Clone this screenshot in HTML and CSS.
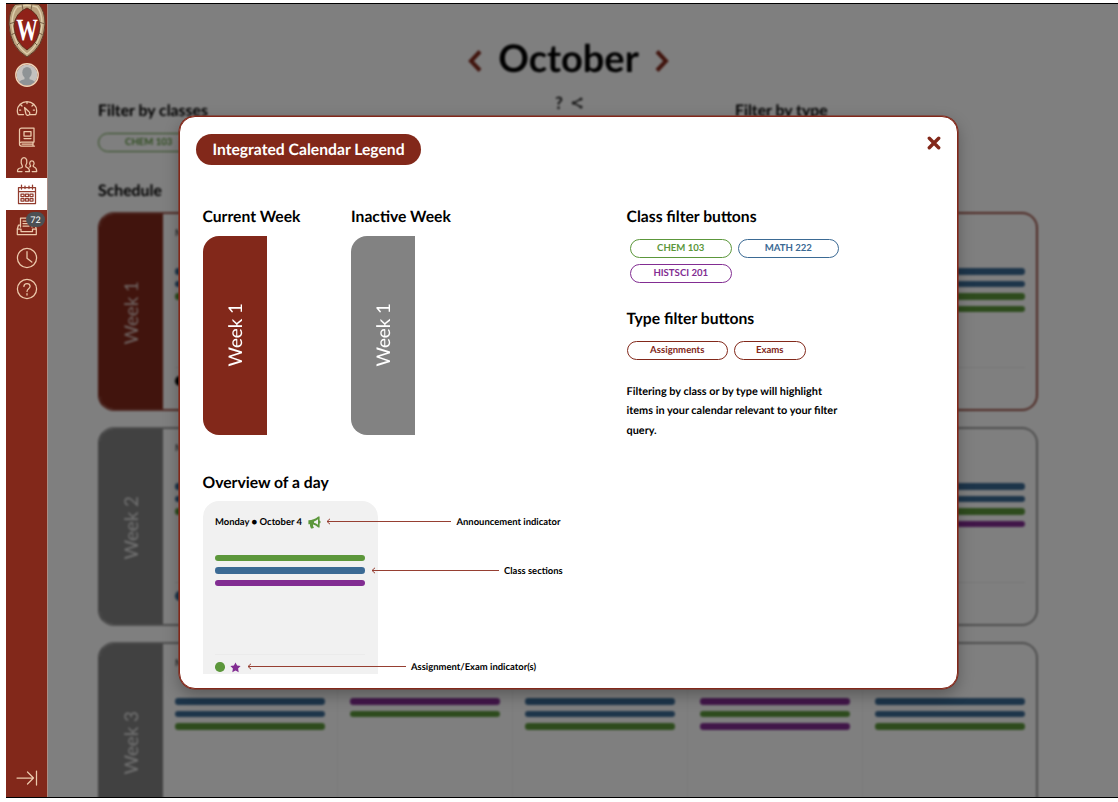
FILE: index.html
```
<!DOCTYPE html>
<html lang="en">
<head>
<meta charset="utf-8">
<title>Integrated Calendar</title>
<link rel="stylesheet" href="styles.css">
</head>
<body>
<div class="frame">
  <nav class="sidebar">
    <a class="nav-crest">
      <svg width="38" height="54" viewBox="0 0 38 54">
        <path d="M7 .5Q19-2 31 .5Q37 7 37 20Q36 43 19 53Q2 43 1 20Q1 7 7 .5Z" fill="#b9a17d" stroke="#5d3d2b"/>
        <path d="M9 3Q19 0 29 3Q34 9 34 20Q32 41 19 50Q6 41 4 20Q4 9 9 3Z" fill="none" stroke="#dccdaa" stroke-width="1.500"/>
        <path d="M1 20l6-2M3 31l6-3M9 41l4-4M37 20l-6-2M35 31l-6-3M29 41l-4-4M14 0l1 6M24 0l-1 6" stroke="#786148" stroke-width="1"/>
        <path d="M19 4Q31 9 32 22Q31 38 19 46Q7 38 6 22Q7 9 19 4Z" fill="#8f2119" stroke="#60301f"/>
        <text class="crest-letter" transform="translate(19 35.500) scale(.7 1)" text-anchor="middle">W</text>
      </svg>
    </a>
    <a class="nav-item nav-avatar">
      <svg width="26" height="26" viewBox="0 0 26 26"><defs><clipPath id="face"><circle cx="13" cy="13" r="10.5"/></clipPath></defs><circle cx="13" cy="13" r="11" fill="#82281a"/><g clip-path="url(#face)" fill="#a5a8ac"><path fill="#c4c1bf" d="M0 0h26v26H0z"/><ellipse cx="13" cy="10.500" rx="4.700" ry="5.600" fill="#8f9396"/><path fill="#8f9396" d="M10.500 14h5v3.200q6 1.500 7 4.800v4h-19v-4q1-3.300 7-4.800z"/></g><circle cx="13" cy="13" r="11.200" fill="none" stroke="#efd3b7" stroke-width="1.400"/></svg>
    </a>
    <a class="nav-item nav-gauge">
      <svg class="line" width="22" height="22" viewBox="0 0 22 22"><path d="M7.500 17.500H2.200Q1.300 15.500 1.300 13.700A9.700 9.200 0 0 1 20.700 13.700Q20.700 15.500 19.800 17.500H14M8.500 10.500l4.200 4a2 2 0 1 1-2.900 2zM11 5v1.500M5 8l1 1M17 8l-1 1M3.500 13h1.200M17.300 13h1.200"/></svg>
    </a>
    <a class="nav-item nav-book">
      <svg class="line" width="20" height="22" viewBox="0 0 20 22"><path d="M4.500 2H17v14H4.500a2 2 0 0 0 0 4H17.500M2.500 18V4a2 2 0 0 1 2-2M16 16v4M7 5.500h7v4.500H7zM7 12.500h7M5 18h11"/></svg>
    </a>
    <a class="nav-item nav-people">
      <svg class="line" width="22" height="20" viewBox="0 0 22 20"><path d="M6 16.500H1.500q-.2-3 3-3.500 2.300-.4 1.800-2Q4.600 7.500 5.300 5q.7-2.400 2.700-2.400t2.700 2.400q.7 2.700-1 5.500-.2 1.600 1.300 2 2.500.700 2.500 4H9.500M13.500 12q1.600-.4 1-1.400-1.200-1.600-.7-3.100.5-1.700 2.100-1.700T18 7.500q.5 1.500-.8 3.100-.4 1 1 1.400 2.500.8 2.500 4.500h-4.500"/></svg>
    </a>
    <a class="nav-item nav-calendar">
      <svg class="line" width="20" height="22" viewBox="0 0 20 22"><path d="M1.500 3.500h17v16h-17zM1.500 7.500h17M4.500 1v4M15.500 1v4M8 2v2.500M12 2v2.500"/><path d="M4 10h3v2.500H4zM8.500 10h3v2.500h-3zM13 10h3v2.500h-3zM4 14.500h3V17H4zM8.500 14.500h3V17h-3zM13 14.500h3V17h-3z"/></svg>
    </a>
    <a class="nav-item nav-inbox">
      <svg class="line" width="22" height="22" viewBox="0 0 22 22"><path d="M4.500 12V3H16v9M7 6h6M7 8.500h6M7 11h6M4.500 10H2.500l-1.200 4v5.500h19V14l-1.200-4H16M1.300 14H5v2.500h11.500V14h3.800"/></svg>
      <span class="badge">72</span>
    </a>
    <a class="nav-item nav-clock">
      <svg class="line" width="22" height="22" viewBox="0 0 22 22"><circle cx="11" cy="11" r="9.600"/><path d="M11 4.500v6.800l4.800 3.700"/></svg>
    </a>
    <a class="nav-item nav-help">
      <svg class="line" width="22" height="22" viewBox="0 0 22 22"><circle cx="11" cy="11" r="9.600"/><path d="M7.900 8.500Q8 5.500 11 5.500T14.100 8.300Q14.100 9.600 12.600 10.700T11 13.500M11 15.500v1.500"/></svg>
    </a>
    <a class="nav-expand">
      <svg class="line" width="22" height="16" viewBox="0 0 22 16"><path d="M1 8h16.500M11.500 2l6 6-6 6M20.500 1v14"/></svg>
    </a>
  </nav>

  <main class="page">
    <div class="page-content">
      <header class="month">
        <svg width="14" height="24" viewBox="0 0 14 24"><path d="M12 2.500L3 12l9 9.500"/></svg>
        <h1>October</h1>
        <svg width="14" height="24" viewBox="0 0 14 24"><path d="M2 2.500L11 12l-9 9.500"/></svg>
      </header>
      <div class="tools">
        <span>?</span>
        <svg width="12" height="12" viewBox="0 0 12 12"><path d="M10 2L2.500 6 10 10" fill="none" stroke="#333" stroke-width="1.500"/><g fill="#333"><circle cx="10" cy="2" r="1.600"/><circle cx="2.500" cy="6" r="1.800"/><circle cx="10" cy="10" r="1.600"/></g></svg>
      </div>
      <div class="filters">
        <section><h2>Filter by classes</h2><span class="pill green">CHEM 103</span></section>
        <section><h2>Filter by type</h2></section>
      </div>
      <h2 class="schedule-title">Schedule</h2>
      <div class="weeks">
        <article class="week current">
          <div class="week-tab"><span>Week 1</span></div>
          <div class="day"><p>Monday</p><div class="bars"><i class="blue"></i><i class="blue"></i><i class="green"></i></div><footer><b></b></footer></div>
          <div class="day"></div><div class="day"></div><div class="day"></div>
          <div class="day"><p></p><div class="bars"><i class="blue"></i><i class="blue"></i><i class="green"></i><i class="green"></i></div><footer></footer></div>
        </article>
        <article class="week">
          <div class="week-tab"><span>Week 2</span></div>
          <div class="day"><p>Monday</p><div class="bars"><i class="blue"></i><i class="blue"></i><i class="green"></i></div><footer><b class="blue"></b></footer></div>
          <div class="day"></div><div class="day"></div><div class="day"></div>
          <div class="day"><p></p><div class="bars"><i class="blue"></i><i class="blue"></i><i class="green"></i><i class="purple"></i></div><footer></footer></div>
        </article>
        <article class="week">
          <div class="week-tab"><span>Week 3</span></div>
          <div class="day"><p>Monday</p><div class="bars"><i class="blue"></i><i class="blue"></i><i class="green"></i></div></div>
          <div class="day"><p></p><div class="bars"><i class="purple"></i><i class="green"></i></div></div>
          <div class="day"><p></p><div class="bars"><i class="blue"></i><i class="blue"></i><i class="green"></i></div></div>
          <div class="day"><p></p><div class="bars"><i class="purple"></i><i class="green"></i><i class="purple"></i></div></div>
          <div class="day"><p></p><div class="bars"><i class="blue"></i><i class="blue"></i><i class="green"></i></div></div>
        </article>
      </div>
    </div>
    <div class="scrim"></div>
  </main>
</div>

<div class="modal" role="dialog">
  <header class="modal-head">
    <h2>Integrated Calendar Legend</h2>
    <svg width="14" height="14" viewBox="0 0 14 14"><path d="M2.300 2.300l9.400 9.400M11.700 2.300l-9.400 9.400" stroke="#82281a" stroke-width="3.400" stroke-linecap="round"/></svg>
  </header>
  <div class="modal-body">
    <div class="legend-left">
      <div class="week-samples">
        <section><h3>Current Week</h3><div class="sample current"><span>Week 1</span></div></section>
        <section><h3>Inactive Week</h3><div class="sample"><span>Week 1</span></div></section>
      </div>
      <h3 class="overview-title">Overview of a day</h3>
      <div class="overview">
        <div class="day-card">
          <div class="day-date">Monday ● October 4
            <svg width="13" height="13" viewBox="0 0 13 13"><path d="M.4 4.200Q5.500 4.300 10.300.4h1.300v4q1 .4 1 1.500t-1 1.500v4h-1.300Q7.700 9.200 5 8.500q-.3 2 1 3-.8 1.200-3 1Q1.500 10.500 2 8.200H.4z" fill="#5c973b"/><path d="M6 5.400Q8.200 4.600 10 3.200v5.600Q8.200 7.500 6 6.800z" fill="#f1f1f1"/></svg>
          </div>
          <div class="bars"><i class="green"></i><i class="blue"></i><i class="purple"></i></div>
          <footer><b class="green"></b><svg width="11" height="11" viewBox="0 0 11 11"><path d="M5.500.4l1.600 3.200 3.500.5-2.500 2.500.6 3.600-3.200-1.700-3.200 1.700.6-3.600L.4 4.100l3.500-.5z" fill="#822d92"/></svg></footer>
        </div>
        <div class="note note-announce"><svg width="125" height="7"><path d="M125 3.500H1M4 .8L1 3.500l3 2.700"/></svg><span>Announcement indicator</span></div>
        <div class="note note-class"><svg width="128" height="7"><path d="M128 3.500H1M4 .8L1 3.500l3 2.700"/></svg><span>Class sections</span></div>
        <div class="note note-exam"><svg width="159" height="7"><path d="M159 3.500H1M4 .8L1 3.500l3 2.700"/></svg><span>Assignment/Exam indicator(s)</span></div>
      </div>
    </div>
    <div class="legend-right">
      <h3>Class filter buttons</h3>
      <div class="pills class-pills"><span class="pill green">CHEM 103</span><span class="pill blue">MATH 222</span><span class="pill purple">HISTSCI 201</span></div>
      <h3>Type filter buttons</h3>
      <div class="pills"><span class="pill red">Assignments</span><span class="pill red short">Exams</span></div>
      <p>Filtering by class or by type will highlight items in your calendar relevant to your filter query.</p>
    </div>
  </div>
</div>
</body>
</html>
```
FILE: styles.css
```
:root { --red: #82281a; --green: #5c973b; --blue: #3b6a94; --purple: #822d92; --gray: #828282; }
* { box-sizing: border-box; }
body { margin: 0; height: 802px; overflow: hidden; background: #fff; color: #000; font-family: Lato, "Liberation Sans", sans-serif; text-rendering: geometricPrecision; }
h1, h2, h3, p { margin: 0; }
svg { display: block; flex: none; }
.frame { margin: 3px 0 0 6px; height: 795px; border-top: 1px solid #000; border-bottom: 1px solid #000; display: flex; }

.sidebar { width: 42px; flex: none; background: var(--red); border-right: 1px solid #aa8d84; display: flex; flex-direction: column; }
.nav-crest { height: 54px; padding-left: 2px; overflow: hidden; }
.crest-letter { font: bold 31px "Liberation Serif", serif; fill: #fff; }
.nav-item { display: flex; align-items: center; justify-content: center; position: relative; height: 31px; }
.nav-avatar { height: 34px; }
.nav-book { height: 28px; }
.nav-people { height: 28px; }
.nav-calendar { height: 32px; margin-top: -1px; background: #fff; }
.nav-inbox { height: 32px; }
.nav-help { height: 32px; }
.line { fill: none; stroke: #ecc9ac; stroke-width: 1.25; stroke-linejoin: round; stroke-linecap: round; }
.nav-calendar .line { stroke: #923c2e; margin-top: 2px; }
.badge { position: absolute; left: 20px; top: 2px; width: 19px; height: 15px; border-radius: 8px; background: #4b5054; color: #fff; font-size: 9px; line-height: 15px; text-align: center; }
.nav-expand { margin-top: auto; height: 38px; padding: 11px 0 0 10px; }

.page { flex: 1; position: relative; overflow: hidden; background: #fff; }
.page-content { padding: 29px 0 0 50px; filter: blur(1.3px); height: 793px; width: 1070px; }
.scrim { position: absolute; inset: 0; background: rgba(0, 0, 0, .5); }
.month { width: 940px; height: 50px; display: flex; align-items: center; justify-content: center; gap: 16.500px; padding-left: 1px; }
.month h1 { font-size: 38px; line-height: 50px; }
.month svg { fill: none; stroke: var(--red); stroke-width: 4; margin-top: 6px; }
.tools { width: 940px; height: 17px; margin-top: 11px; padding-left: 2px; display: flex; justify-content: center; align-items: center; gap: 8px; font-size: 17px; font-weight: 900; color: #333; }
.filters { display: grid; grid-template-columns: 637px 300px; height: 80px; margin-top: -8px; }
.page-content h2 { font-size: 15.800px; line-height: 20px; margin-top: -2px; }
.filters .pill { margin-top: 12px; }
.page-content .schedule-title { margin-top: -2px; height: 31px; }
.weeks { display: flex; flex-direction: column; gap: 16px; }
.week { --tab: var(--gray); --edge: #9c9c9c; width: 940px; height: 199px; flex: none; border: 2px solid var(--edge); border-left-color: var(--tab); border-radius: 16px; overflow: hidden; display: grid; grid-template-columns: 62.500px repeat(5, 175px); }
.week.current { --tab: var(--red); --edge: #9d5348; }
.week-tab { background: var(--tab); }
.week-tab, .sample { display: flex; align-items: center; justify-content: center; color: #fff; font-size: 18.800px; }
.week-tab span, .sample span { writing-mode: vertical-rl; transform: rotate(180deg); line-height: 24px; margin-left: 2px; }
.sample span { margin-bottom: 1px; }
.week-tab span { margin-top: 3px; }
.week-tab { color: #e4e4e4; }
.week.current .week-tab { color: #dfcac6; }
.day { padding: 14px 12.500px 0; border-right: 1px solid #f4f4f4; }
.day:last-child { border-right: 0; }
.day p { font-size: 9.500px; height: 40px; font-weight: 700; color: #555; }
.bars { display: flex; flex-direction: column; gap: 6px; }
.bars i { display: block; width: 150px; height: 6.500px; border-radius: 3.250px; background: currentColor; }
.day .bars { height: 95px; }
.green { color: var(--green); } .blue { color: var(--blue); } .purple { color: var(--purple); } .red { color: var(--red); }
footer { border-top: 1px solid #ebebeb; }
footer b { display: block; width: 9.500px; height: 9.500px; border-radius: 50%; background: currentColor; }
.day footer { width: 150px; padding-top: 8px; margin-top: 4px; }

.pill { display: flex; align-items: center; justify-content: center; width: 101.500px; height: 19px; border: 1px solid; border-radius: 10px; font-size: 9.600px; font-weight: 700; }

.modal { position: absolute; left: 179px; top: 116px; width: 779px; height: 572.500px; background: #fff; border: 1px solid var(--red); border-radius: 16px; box-shadow: 0 0 0 .6px var(--red), 0 6px 16px rgba(0, 0, 0, .3); }
.modal-head { display: flex; justify-content: space-between; padding: 17px 16px 0 16px; height: 88px; }
.modal-head h2 { width: 225px; height: 31px; border-radius: 16px; background: var(--red); color: #fff; font-size: 15.700px; line-height: 32px; text-align: center; }
.modal-head svg { margin-top: 2px; }
.modal-body { display: grid; grid-template-columns: 424px 225px; padding-left: 22.500px; }
h3 { font-size: 15.700px; line-height: 24px; margin-bottom: -2px; white-space: nowrap; }
.week-samples { display: grid; grid-template-columns: 148.500px 150px; }
.sample { width: 64px; height: 199px; margin-top: 8.500px; background: var(--gray); border-radius: 16px 0 0 16px; }
.sample.current { background: var(--red); }
.overview-title { margin-top: 36.500px; }
.overview { position: relative; margin-top: 8px; }
h3 + .sample, h3 + .overview, h3 + .pills { position: relative; }
.day-card { width: 175px; height: 173px; border-radius: 16px 16px 0 0; background: #f1f1f1; padding: 13px 12.500px 0; }
.day-date { display: flex; align-items: center; gap: 5.500px; height: 16px; font-size: 9.450px; font-weight: 700; white-space: nowrap; }
.day-card .bars { margin-top: 24.500px; }
.day-card footer { margin-top: 67.500px; padding-top: 7px; display: flex; align-items: center; gap: 5px; }
.note { position: absolute; display: flex; align-items: center; gap: 5.500px; font-size: 9.450px; font-weight: 700; line-height: 14px; white-space: nowrap; }
.note span { padding-top: 1.500px; margin-bottom: -1.500px; }
.note path { fill: none; stroke: #963f32; stroke-width: 1; }
.note-announce { left: 123.500px; top: 13px; }
.note-class { left: 168px; top: 62px; }
.note-exam { left: 44px; top: 158.500px; }
.pills { display: flex; flex-wrap: wrap; gap: 6px; margin-top: 11.500px; }
.class-pills { padding-left: 3.500px; margin-bottom: 24.500px; }
.pill.short { width: 71.500px; }
.legend-right p { width: 218px; margin-top: 22px; font-size: 10.900px; line-height: 19.500px; font-weight: 700; }
```
